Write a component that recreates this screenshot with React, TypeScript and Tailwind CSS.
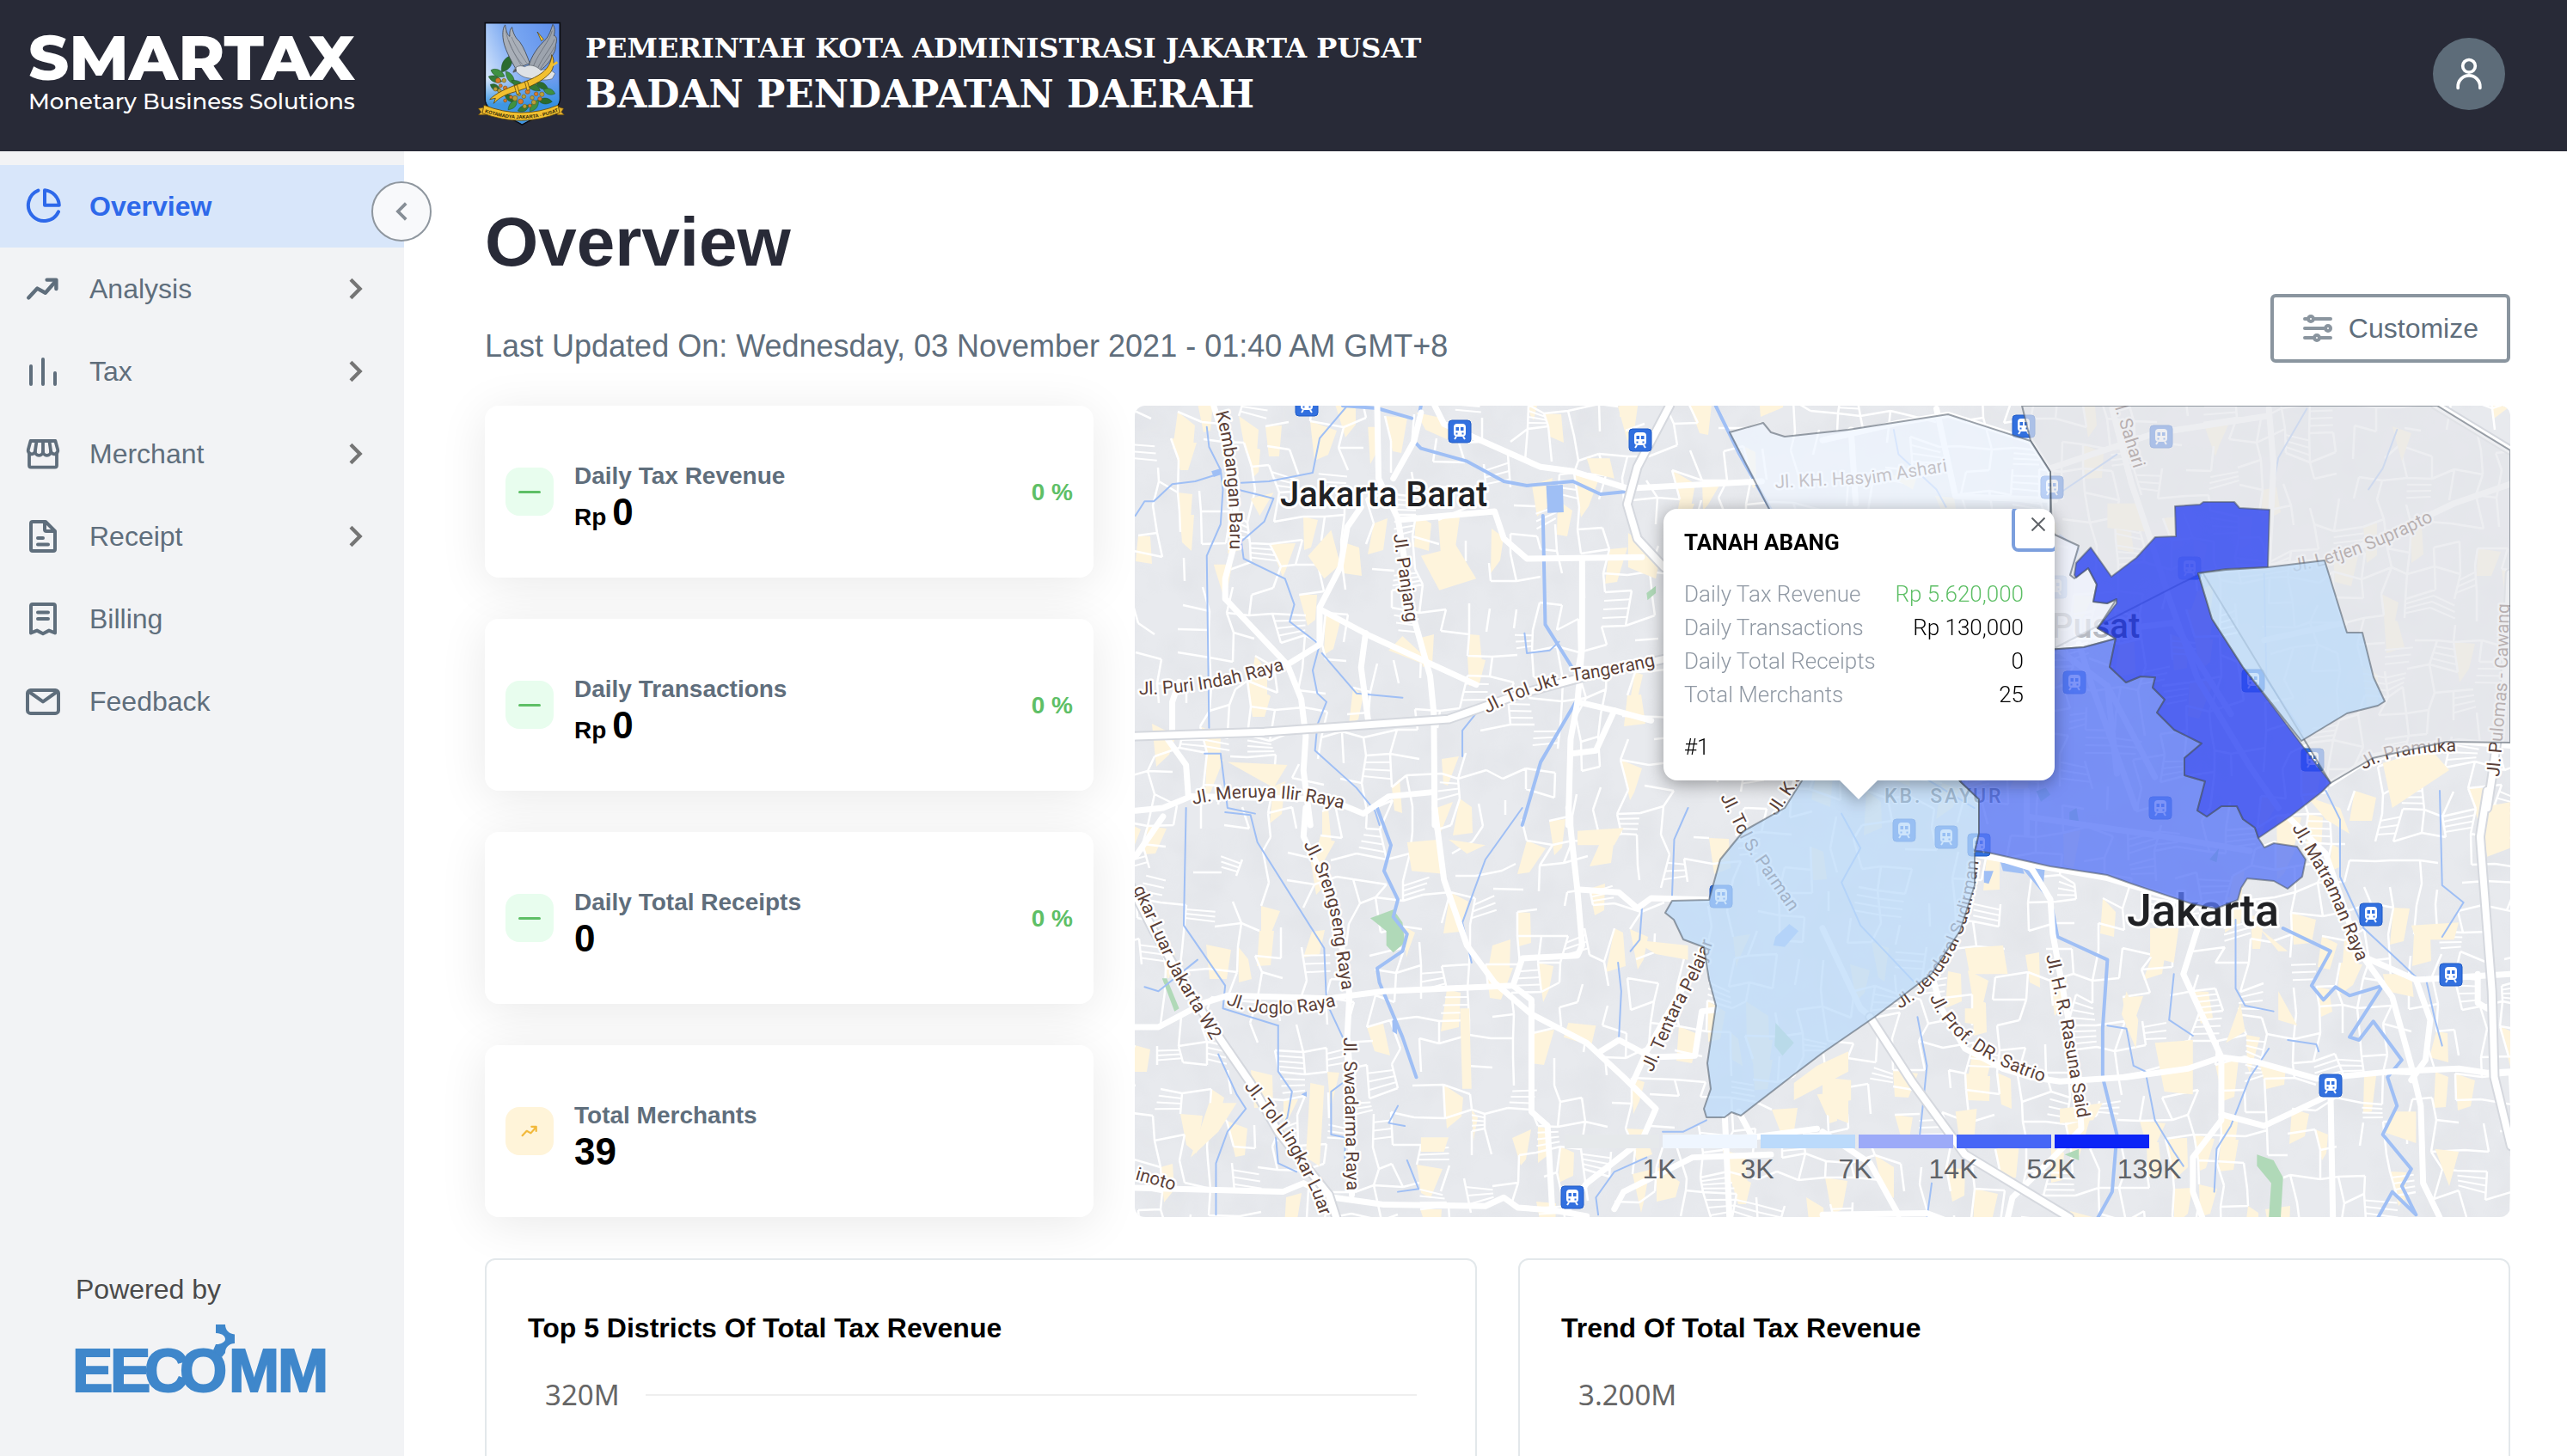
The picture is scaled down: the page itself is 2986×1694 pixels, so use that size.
import React from "react";

type IconProps = { className?: string };

const stroke = {
  fill: "none",
  stroke: "currentColor",
  strokeWidth: 2,
  strokeLinecap: "round" as const,
  strokeLinejoin: "round" as const,
};

const PieIcon = ({ className }: IconProps) => (
  <svg viewBox="0 0 24 24" className={className} {...stroke} aria-hidden="true">
    <path d="M9.200 2.800A9.200 9.200 0 1 0 21 15.200" />
    <path d="M13 2.600A9.200 9.200 0 0 1 21.400 11.400H13Z" />
  </svg>
);
const TrendIcon = ({ className }: IconProps) => (
  <svg viewBox="0 0 24 24" className={className} {...stroke} strokeWidth={2.2} aria-hidden="true">
    <path d="M3.600 17.200L8.700 11.800 13.400 14.400 19 8" />
    <path d="M14.300 6.800H19.700V12" />
  </svg>
);
const BarsIcon = ({ className }: IconProps) => (
  <svg viewBox="0 0 24 24" className={className} {...stroke} aria-hidden="true">
    <path d="M5 9v10.500M12 5v14.500M19 13v6.500" />
  </svg>
);
const StoreIcon = ({ className }: IconProps) => (
  <svg viewBox="0 0 24 24" className={className} {...stroke} strokeWidth={1.9} aria-hidden="true">
    <path d="M4 11.500V18.800a1 1 0 0 0 1 1H19a1 1 0 0 0 1-1V11.500" />
    <path d="M4.800 4.500H19.200L20.600 9.600a2 2 0 0 1-4 1 2.300 2.300 0 0 1-4.600 0 2.300 2.300 0 0 1-4.600 0 2 2 0 0 1-4-1Z" />
    <path d="M8.300 4.500L7.400 10.600M12 4.500V10.600M15.700 4.500L16.600 10.600" />
  </svg>
);
const FileIcon = ({ className }: IconProps) => (
  <svg viewBox="0 0 24 24" className={className} {...stroke} aria-hidden="true">
    <path d="M6 3.500H13.500L19 9V19.500a1 1 0 0 1-1 1H6a1 1 0 0 1-1-1V4.500a1 1 0 0 1 1-1Z" />
    <path d="M13 4V8a1 1 0 0 0 1 1H18.500M9 13h3M9 16.800h6" />
  </svg>
);
const BillIcon = ({ className }: IconProps) => (
  <svg viewBox="0 0 24 24" className={className} {...stroke} aria-hidden="true">
    <path d="M5 20.200V4.500a1 1 0 0 1 1-1H18a1 1 0 0 1 1 1V20.200L15.500 18.800 12 20.600 8.500 18.800Z" />
    <path d="M9 8.300h6M9 12h6" />
  </svg>
);
const MailIcon = ({ className }: IconProps) => (
  <svg viewBox="0 0 24 24" className={className} {...stroke} aria-hidden="true">
    <rect x="3" y="5.500" width="18" height="13.500" rx="1.800" />
    <path d="M4 6.500l8 5.700 8-5.700" />
  </svg>
);
const Chevron = ({ className }: IconProps) => (
  <svg viewBox="0 0 24 24" className={className} fill="none" stroke="currentColor" strokeWidth="3.200" aria-hidden="true">
    <path d="M7.500 4L15.500 12l-8 8" />
  </svg>
);
const SlidersIcon = ({ className }: IconProps) => (
  <svg viewBox="0 0 36 36" className={className} fill="none" stroke="currentColor" strokeWidth="4" strokeLinecap="round" aria-hidden="true">
    <path d="M3 7h3M14 7h19M3 18h22M3 29h10M21 29h12" />
    <circle cx="10" cy="7" r="3" />
    <circle cx="30" cy="18" r="3" />
    <circle cx="17" cy="29" r="3" />
  </svg>
);

const navItems = [
  { label: "Overview", Icon: PieIcon, active: true, expandable: false },
  { label: "Analysis", Icon: TrendIcon, active: false, expandable: true },
  { label: "Tax", Icon: BarsIcon, active: false, expandable: true },
  { label: "Merchant", Icon: StoreIcon, active: false, expandable: true },
  { label: "Receipt", Icon: FileIcon, active: false, expandable: true },
  { label: "Billing", Icon: BillIcon, active: false, expandable: false },
  { label: "Feedback", Icon: MailIcon, active: false, expandable: false },
];

const berries = [
  [103, 236, 9], [124, 236, 7], [112, 254, 6], [94, 266, 7], [128, 262, 7], [108, 272, 7], [140, 272, 6],
  [162, 298, 9], [182, 309, 9], [193, 292, 7], [206, 275, 8], [222, 296, 7], [236, 283, 7], [256, 284, 8],
  [249, 300, 7], [228, 312, 8], [214, 324, 6], [196, 326, 7], [148, 294, 6], [176, 284, 6], [128, 306, 6],
];

const leaves = [
  "M115 205C112 170 130 155 150 148C158 175 145 200 118 206Z",
  "M78 200C95 190 118 200 126 222C105 228 86 220 78 200Z",
  "M70 222C88 214 108 222 116 240C96 248 78 240 70 222Z",
  "M76 250C92 244 104 252 112 270C94 276 80 268 76 250Z",
  "M130 204C150 208 162 226 160 248C142 244 130 228 130 204Z",
  "M150 236C174 232 190 244 196 262C172 266 158 256 150 236Z",
  "M126 286C142 280 160 290 166 312C146 314 132 306 126 286Z",
  "M138 338C140 318 152 306 168 302C172 322 160 336 138 338Z",
  "M206 250C226 240 244 250 250 272C228 274 214 268 206 250Z",
  "M236 244C256 236 270 246 278 266C256 270 242 262 236 244Z",
  "M214 344C212 322 226 308 244 304C246 326 236 340 214 344Z",
  "M172 342C178 326 194 320 212 322C206 342 190 350 172 342Z",
  "M244 306C262 292 280 296 292 310C274 322 256 320 244 306Z",
  "M262 268C280 258 294 266 302 282C284 290 268 284 262 268Z",
];

function Crest() {
  return (
    <svg viewBox="0 0 366 420" className="h-[140px] w-[122px] shrink-0" role="img" aria-label="Kotamadya Jakarta Pusat">
      <defs>
        <linearGradient id="crestSky" x1="1" y1="0" x2="0" y2="0.6">
          <stop offset="0" stopColor="#5a8bea" />
          <stop offset="0.55" stopColor="#7ba9f2" />
          <stop offset="1" stopColor="#dceafc" />
        </linearGradient>
        <linearGradient id="crestWater" x1="0" y1="0" x2="0" y2="1">
          <stop offset="0.55" stopColor="#2f8ee0" stopOpacity="0" />
          <stop offset="0.8" stopColor="#2f8ee0" stopOpacity="0.9" />
        </linearGradient>
        <path id="crestBanner" d="M54 346Q186 394 316 343" />
      </defs>
      <path d="M58 35H319V300C319 345 250 352 187 390C124 352 58 345 58 300Z" fill="url(#crestSky)" stroke="#0b0d14" strokeWidth="5" />
      <path d="M60 37H317V300C317 345 250 350 187 388C124 350 60 345 60 300Z" fill="url(#crestWater)" />
      {leaves.map((d, i) => (
        <path key={d} d={d} fill={i % 3 === 0 ? "#2b6b2f" : i % 3 === 1 ? "#3f9142" : "#347a37"} stroke="#1d4a22" strokeWidth="1.500" />
      ))}
      {berries.map(([x, y, r], i) => (
        <circle key={`${x}-${y}`} cx={x} cy={y} r={r} fill={i % 2 ? "#b8a03a" : "#d77a2a"} stroke="#6b4a18" strokeWidth="1.500" />
      ))}
      <path d="M240 66L262 92L254 98Z" fill="#f5c93b" stroke="#4d3b0a" strokeWidth="2" />
      <path d="M165 195C150 170 122 120 120 85C118 60 124 44 128 42C132 66 136 78 144 82C142 66 146 54 152 50C156 74 166 90 178 100C194 122 204 150 214 176Z" fill="#a9afb8" stroke="#3f4650" strokeWidth="2.500" />
      <path d="M130 62C136 100 160 150 190 182M150 84C160 110 185 150 204 176M140 96C150 126 170 160 184 184" stroke="#6c737d" strokeWidth="2" fill="none" />
      <path d="M208 192C218 150 244 116 270 92C282 78 288 58 294 40C302 50 302 66 298 80C308 78 310 98 304 110C306 128 298 140 292 150C286 172 262 192 246 204Z" fill="#9da4ae" stroke="#3f4650" strokeWidth="2.500" />
      <path d="M292 62C282 100 250 130 226 186M300 92C288 124 262 148 240 196M300 118C290 140 268 168 250 196" stroke="#5d646e" strokeWidth="2" fill="none" />
      <path d="M156 208C158 188 178 180 196 188C214 178 236 184 252 200C270 194 290 198 302 212L292 230C268 238 236 232 212 228C190 226 176 214 166 204Z" fill="#dfe2e6" stroke="#596069" strokeWidth="2" />
      <path d="M166 190L154 208L168 204Z" fill="#4c515a" />
      <path d="M290 146C300 160 300 190 286 208C258 240 210 262 160 276C132 284 108 294 88 316L94 298L74 302C96 280 132 264 164 252C212 236 254 218 274 192C284 178 290 164 290 146Z" fill="#f2c02f" stroke="#5c430b" strokeWidth="2.500" />
      <path d="M288 186L310 172" stroke="#f2c02f" strokeWidth="8" />
      <rect x="164" y="252" width="10" height="32" fill="#f2c02f" stroke="#5c430b" strokeWidth="2" transform="rotate(-16 169 268)" />
      <rect x="200" y="238" width="10" height="32" fill="#f2c02f" stroke="#5c430b" strokeWidth="2" transform="rotate(-16 205 254)" />
      <path d="M34 334L62 328L60 356H34L44 346ZM332 334L306 326L310 356H334L324 346Z" fill="#e0ae2c" stroke="#5c430b" strokeWidth="2" />
      <path d="M54 322Q186 374 312 322L318 348Q186 402 48 350Z" fill="#f2c02f" stroke="#5c430b" strokeWidth="2.500" />
      <text className="font-['Liberation_Sans'] text-[17px] font-bold" fill="#2a2208" textAnchor="middle">
        <textPath href="#crestBanner" startOffset="50%">KOTAMADYA JAKARTA - PUSAT</textPath>
      </text>
    </svg>
  );
}

function Header() {
  return (
    <header className="flex h-44 shrink-0 bg-[#282a37] text-white">
      <div className="w-[545px] shrink-0 pl-[33px] pt-[31px] font-['Montserrat','Inter',sans-serif]">
        <div className="text-[73px] leading-[72px] font-extrabold">SMARTAX</div>
        <div className="text-[26px] leading-[30px] font-medium">Monetary Business Solutions</div>
      </div>
      <div className="pt-[15px]">
        <Crest />
      </div>
      <div className="pl-[14px] pt-[34px] font-['Roboto_Slab','DejaVu_Serif',serif] font-bold whitespace-nowrap">
        <div className="text-[32px] leading-[44px]">PEMERINTAH KOTA ADMINISTRASI JAKARTA PUSAT</div>
        <div className="mt-1 text-[44px] leading-[56px]">BADAN PENDAPATAN DAERAH</div>
      </div>
      <button aria-label="Account" className="mt-11 mr-[72px] ml-auto flex size-[84px] items-center justify-center rounded-full bg-[#5d6c79]">
        <svg viewBox="0 0 24 24" className="size-11" {...stroke}>
          <circle cx="12" cy="7" r="4" />
          <path d="M5 21v-1a7 7 0 0 1 14 0v1" />
        </svg>
      </button>
    </header>
  );
}

function PartnerLogo() {
  return (
    <svg viewBox="0 0 292 82" className="h-[82px] w-[292px] overflow-visible" role="img" aria-label="EECOMM" fill="#3f87cb">
      <text x="-4 40 80 121 178 235" y="78" stroke="#3f87cb" strokeWidth="2" className="font-['Liberation_Sans'] text-[71px] font-bold">EECOMM</text>
      <path d="M163 0H174C174 6 178 11 185 11.500V22C179 22 174 26 174 33L170 38 160 30 163 23C170 23 174 20 174 17C174 13 169 10 163 10Z" />
    </svg>
  );
}

function Sidebar() {
  return (
    <aside className="relative flex w-[470px] shrink-0 flex-col bg-[#f2f3f5] pt-4">
      <nav className="flex flex-col">
        {navItems.map(({ label, Icon, active, expandable }) => (
          <a
            key={label}
            href="#"
            className={
              active
                ? "flex h-24 items-center bg-[#d8e6fa] pr-10 pl-[26px] text-[32px] font-bold text-[#2e69ea]"
                : "flex h-24 items-center pr-10 pl-[26px] text-[32px] text-[#5f6e7c]"
            }
          >
            <Icon className="size-12" />
            <span className="ml-[30px] flex-1">{label}</span>
            {expandable && <Chevron className="size-8 text-[#757575]" />}
          </a>
        ))}
      </nav>
      <button
        aria-label="Collapse sidebar"
        className="absolute top-[35px] -right-8 z-10 flex size-[70px] items-center justify-center rounded-full border-2 border-[#8f979f] bg-[#f8f9fb] text-[#868e96]"
      >
        <Chevron className="size-7 rotate-180" />
      </button>
      <div className="mt-auto mb-[71px] ml-[88px]">
        <p className="text-[32px] leading-10 text-[#4a4a4a]">Powered by</p>
        <div className="mt-[21px]">
          <PartnerLogo />
        </div>
      </div>
    </aside>
  );
}

const stats = [
  { title: "Daily Tax Revenue", prefix: "Rp", value: "0", change: "0 %" },
  { title: "Daily Transactions", prefix: "Rp", value: "0", change: "0 %" },
  { title: "Daily Total Receipts", prefix: "", value: "0", change: "0 %" },
  { title: "Total Merchants", prefix: "", value: "39", change: "" },
];

function StatCard({ title, prefix, value, change }: (typeof stats)[number]) {
  return (
    <section className="flex h-[200px] items-center rounded-2xl bg-white px-6 shadow-[0_8px_56px_rgba(0,0,0,0.09)]">
      {change ? (
        <div className="flex size-14 items-center justify-center rounded-2xl bg-[#e8fdee]">
          <div className="h-[3px] w-[26px] rounded-full bg-[#5ebf66]" />
        </div>
      ) : (
        <div className="flex size-14 items-center justify-center rounded-2xl bg-[#fff4d9]">
          <TrendIcon className="size-6 text-[#f2b93b]" />
        </div>
      )}
      <div className="mt-3 ml-6 flex-1 font-bold">
        <h2 className="text-[28px] leading-9 text-[#5f6e7c]">{title}</h2>
        <p className="flex h-12 items-baseline gap-[7px] text-[44px] leading-[48px] text-black">
          {prefix && <span className="text-[28px] leading-none">{prefix}</span>}
          {value}
        </p>
      </div>
      <span className="pt-0.5 text-[28px] font-bold text-[#5ebf66]">{change}</span>
    </section>
  );
}

/* ---------- Map ---------- */

function createRandom(seed: number) {
  let s = seed;
  return () => {
    s = (s * 1664525 + 1013904223) % 4294967296;
    return s / 4294967296;
  };
}

function buildStreets() {
  const rnd = createRandom(77);
  const cols = 60;
  const rows = 36;
  const step = 28;
  const pts: number[][][] = [];
  for (let r = 0; r < rows; r++) {
    pts.push([]);
    for (let c = 0; c < cols; c++) {
      const bend = Math.sin(r / 6) * 14 + Math.cos(c / 8) * 6;
      pts[r].push([Math.round(c * step + bend + (rnd() - 0.5) * 14 - 20), Math.round(r * step + Math.sin(c / 5) * 12 + (rnd() - 0.5) * 14 - 20)]);
    }
  }
  let streets = "";
  let blocks = "";
  let lanes = "";
  for (let r = 0; r < rows - 1; r++) {
    for (let c = 0; c < cols - 1; c++) {
      const [x, y] = pts[r][c];
      const [x2, y2] = pts[r][c + 1];
      const [x3, y3] = pts[r + 1][c];
      const [x4, y4] = pts[r + 1][c + 1];
      const east = c > 36 ? 0.06 : 0;
      if (rnd() < 0.42 + east) streets += `M${x} ${y}L${x2} ${y2}`;
      if (rnd() < 0.48 + east) streets += `M${x} ${y}L${x3} ${y3}`;
      if (rnd() < 0.11) blocks += `M${x} ${y}L${x2 - 8} ${y2 + 4}L${x4 - 12} ${y4 + 8}L${x3 + 2} ${y3 + 12}Z`;
      if (rnd() < 0.09) {
        for (let k = 1; k < 4; k++) {
          const t = k / 4;
          lanes += `M${x + (x3 - x) * t} ${y + (y3 - y) * t}L${x2 + (x4 - x2) * t} ${y2 + (y4 - y2) * t}`;
        }
      }
    }
  }
  return { streets, blocks, lanes };
}

const { streets, blocks, lanes } = buildStreets();

type Tile = { transform: string; water: string[]; canals: string[]; roads: string[]; highways: string[]; parks: string[]; lakes: string[]; sands: string[] };

const tiles: Tile[] = [
  {
    transform: "translate(-10 -12) scale(.5357 .3333)",
    water: ["M640 36L625 160 640 185 740 230 820 300 870 315 970 300 1030 345 1090 335", "M905 420L910 800 980 980 980 1060 900 1280 860 1500", "M1280 36L1330 200 1400 400", "M470 36L545 45 620 80"],
    canals: [
      "M480 36L420 150 405 270 310 300 250 305",
      "M205 260L190 280 150 300 100 310 60 370 40 370 20 420",
      "M245 330L320 360 300 440 250 510 255 570 345 640 365 730 355 790 420 870 405 960 415 1040 435 1070 415 1150 410 1240 500 1370 540 1450 550 1500",
      "M175 110L180 180 205 260 210 330 205 450 175 560 180 1160",
      "M425 900L500 1040 600 1055",
      "M760 1110L730 1170 730 1260",
      "M865 830L870 900 920 890 940 860",
      "M170 1250L205 1250 220 1440 280 1460",
    ],
    roads: [
      "M190 36L240 300 235 520 215 640 215 710 350 940 380 1060 390 1190 385 1310 400 1500",
      "M545 36L548 290 590 430 625 780 660 980 668 1110 670 1500",
      "M640 60L625 160 580 290",
      "M670 36L690 100 900 250 970 265 1090 325",
      "M1090 325L1380 300",
      "M590 435L800 405 820 500 870 570 1120 565",
      "M510 390L480 460 465 600 420 740 420 870 350 940",
      "M425 750L530 840 760 1010",
      "M520 830L510 950 525 1130",
      "M990 570L990 880 980 1070 1060 1100 1140 1135",
      "M980 1070L965 1200 960 1500",
      "M20 1450L80 1440 140 1400 440 1410 515 1460 570 1400 665 1385",
      "M100 1190L100 1070 115 1000",
      "M90 1200L130 1290 135 1400",
      "M1060 1100L1020 1240 970 1250",
    ],
    highways: ["M20 1190L300 1175 700 1130 860 1040 1000 980 1170 920", "M1180 36L1110 250 1088 380 1110 500 1168 600"],
    parks: ["M1130 690L1150 665 1150 690 1132 715Z"],
    lakes: ["M912 315L948 312 950 408 915 410Z", "M185 265L205 255 208 275 190 285Z"],
    sands: ["M525 110L540 110 550 180 530 240Z", "M630 60L690 80 720 170 650 120Z", "M445 470L465 590 430 640 395 560Z", "M700 480L760 640 680 680 640 560 690 540Z", "M1090 480L1160 560 1150 640 1090 600Z", "M600 840L680 960 570 890Z", "M190 590L230 590 215 720Z", "M270 360L320 340 290 420Z", "M220 1280L350 1290 320 1370Z", "M1000 220L1050 220 1060 290 1010 270Z"],
  },
  {
    transform: "translate(-10 468) scale(.5357 .3333)",
    water: ["M545 0L575 130 560 220 590 320 580 380 610 440 600 500 545 560 550 610 600 800 630 940"],
    canals: [
      "M130 0L125 410 215 620 210 700 330 760",
      "M215 15L270 25 285 120 430 490 435 680 470 800",
      "M860 0L780 180 730 400 750 540",
      "M1220 0L1190 110 1185 320",
      "M200 860L240 1000 260 1050 220 1130 195 1240 195 1420",
      "M330 760L330 920 360 990 350 1080 325 1150 330 1240 370 1270",
      "M1260 1090L1210 1130 1165 1130",
      "M1120 350L1115 460 1095 500",
      "M1068 540L1075 640 1070 800",
      "M470 960L445 990 445 1140 475 1150 475 1290",
      "M1130 1220L1060 1270 1020 1360 1025 1420",
      "M610 1230L635 1330 590 1340",
      "M590 1040L570 1100 605 1110",
      "M40 625L70 640 155 530",
    ],
    roads: [
      "M390 0L385 100 440 280 470 500 485 650 480 800 490 1000 490 1350",
      "M670 0L690 250 740 480 800 610 880 720 1000 820 1080 940 1150 1050 1120 1160 1000 1310 960 1400",
      "M20 765L70 765 170 680 220 655 440 665 560 640 840 620 860 525 980 515 990 480 980 290 960 0",
      "M985 285L1070 295 1110 350 1140 315 1260 320",
      "M0 1325L340 1340 385 1310 450 1360 540 1380 560 1385 780 1390 820 1360 850 1395 930 1405 1000 1425",
      "M840 620L880 670 880 1060 915 1110 925 1400",
      "M1270 480L1200 650 1130 850 1100 960",
      "M80 30L20 170",
      "M1030 850L1070 810 1140 870 1235 865 1250 710 1280 705",
      "M1330 1060L1360 1150 1500 1120",
      "M1060 1400L1080 1340 1230 1220 1400 1210",
      "M1300 1080L1310 1430",
    ],
    highways: ["M0 240L60 430 140 650 210 820 270 960 330 1130 440 1350 470 1500"],
    parks: ["M530 385L580 355 600 400 605 470 580 505 565 480 565 430Z", "M78 595L88 595 115 700 105 710Z", "M1410 750L1450 820 1425 865 1408 830Z"],
    lakes: ["M578 740L588 740 588 790 578 780Z", "M1410 450L1440 405 1460 430 1430 485 1405 480Z", "M380 1000L392 990 392 1008Z"],
    sands: ["M610 120L680 110 690 230 620 220Z", "M980 80L1080 70 1060 130 980 130Z", "M700 110L780 130 740 160Z", "M1100 460L1220 480 1220 530 1150 510Z", "M960 750L1020 760 1010 830 950 800Z", "M725 700L745 700 750 980 730 980Z", "M400 960L430 970 420 1250 390 1220Z", "M180 1030L240 1030 200 1130 140 1220Z", "M640 1150L700 1150 690 1200 640 1200Z", "M1450 960L1500 900 1568 850 1568 920 1450 1020Z", "M1500 1000L1568 990 1568 1100 1520 1070Z"],
  },
  {
    transform: "translate(800 -172) scale(.5523 .4082)",
    water: ["M420 980L400 1080 430 1200"],
    canals: ["M150 490L160 560 240 660 260 710", "M1210 490L1180 600 1150 660", "M1020 430L960 570 940 720", "M930 900L935 1200 1010 1350", "M60 1400L200 1470 320 1568", "M500 790L540 830 520 900", "M620 560L500 670"],
    roads: [
      "M0 520L160 470 265 447 438 522 480 610 480 800",
      "M60 490L70 700",
      "M240 430L280 680 490 690",
      "M610 430L650 640 690 800 730 970 790 1200 900 1450 960 1568",
      "M940 430L950 590 945 720 938 882",
      "M800 897L1060 863 1190 790 1330 700 1448 645",
      "M1070 1498L1160 1420 1340 1378 1448 1390",
      "M500 1120L600 1220 700 1480",
      "M600 1220L620 1470",
      "M540 1100L570 1230 660 1568",
      "M480 600L700 500 940 450",
      "M620 1060L740 1040 860 1300",
      "M930 1090L1100 1040",
    ],
    highways: ["M1448 900L1438 1200 1410 1480 1400 1568", "M1290 418L1448 548"],
    parks: ["M450 1520L470 1510 480 1530 460 1550Z"],
    lakes: [],
    sands: ["M600 700L660 700 680 780 600 770Z", "M1200 480L1240 500 1220 580Z", "M1180 1440L1280 1400 1320 1460 1200 1568Z", "M140 620L200 620 190 660Z"],
  },
  {
    transform: "translate(800 448) scale(.5523 .3333)",
    water: ["M425 270L480 380 495 510 600 590 590 830 590 1000 620 1200 610 1400 580 1490", "M970 480L1070 560 1030 680 1055 730 1080 685 1110 715 1180 680 1110 860 1130 870 1160 805 1220 940 1190 1000 1210 1100 1180 1200 1240 1320 1220 1380 1250 1480 1200 1400 1170 1490"],
    canals: [
      "M870 450L870 690 890 750 950 770",
      "M1060 0L1090 100 1090 300 1140 480 1250 650",
      "M740 640L730 800 780 855",
      "M600 820L640 830 655 960 680 980 700 1150 740 1260 760 1310",
      "M825 1400L830 1250 860 1170 900 1000 940 900",
      "M200 790L220 960 205 1200",
      "M1300 0L1305 330 1350 390 1305 510",
      "M1270 650L1290 800 1305 890",
      "M40 80L80 200 40 320 80 470 200 680",
      "M980 870L1040 885 1045 910",
      "M230 1370L220 1490",
    ],
    roads: [
      "M360 230L440 270 480 380 485 500 540 1000 545 1180 480 1290 400 1420 390 1490",
      "M230 640L250 760 300 900 380 970 440 1000 500 1015 640 1000 770 970 840 930 910 945 1040 1005 1200 980 1340 970 1400 985 1450 980",
      "M840 940L840 1150 780 1280 780 1400 800 1490",
      "M330 225L600 305 780 395",
      "M790 480L760 640 840 930",
      "M980 90L1060 220 1130 560 1200 720 1240 960 1260 1100 1265 1370 1300 1490",
      "M1140 580L1250 660 1450 640",
      "M1250 660L1280 800 1270 940 1240 1010",
      "M840 1130L930 1170 1070 1060 1075 1490",
      "M0 1480L220 1475 260 1500",
      "M0 1190L100 1300 160 1480",
      "M430 150L430 0",
      "M430 90L720 160 900 210",
      "M1380 640L1380 740 1400 760",
      "M0 480L80 760 110 800",
    ],
    highways: ["M100 790L190 1020 300 1270 520 1490", "M1400 0L1385 160 1410 700 1415 1000 1450 1240"],
    parks: ["M915 1270L950 1290 970 1350 965 1490 940 1490 945 1370 915 1310Z", "M520 75L535 60 540 110 520 105Z", "M815 240L835 200 830 250Z", "M510 1270L540 1250 540 1290Z"],
    lakes: ["M375 250L420 260 425 290 380 280Z", "M445 270L468 275 465 330 450 300Z", "M340 280L360 280 350 325 340 320Z"],
    sands: ["M300 550L380 540 390 640 310 640Z", "M300 760L340 760 340 820 300 810Z", "M690 480L750 480 740 600 690 580Z", "M700 880L780 870 780 1060 720 1050Z", "M920 480L980 560 960 560Z", "M1180 640L1240 640 1245 720 1190 700Z", "M1240 470L1340 460 1330 520 1250 520Z", "M1200 1120L1250 1120 1250 1230 1180 1190Z", "M0 1000L60 1010 60 1080 0 1100Z", "M640 700L665 800 660 900 630 780Z", "M1020 20L1090 60 1110 150 1060 100Z", "M500 1110L590 1090 570 1150 500 1160Z", "M1290 1250L1340 1260 1320 1380Z", "M960 700L1000 820 960 800Z", "M880 740L890 840 850 880Z", "M280 1120L325 1110 320 1200 290 1240Z", "M1380 60L1448 40 1448 200 1400 230Z"],
  },
];

const roadLabels = [
  { text: "Jl. Puri Indah Raya", d: "M5 336Q90 336 190 302" },
  { text: "Kembangan Baru", d: "M94 8Q114 80 110 190" },
  { text: "Jl. Panjang", d: "M301 150L318 270" },
  { text: "Jl. Tol Jkt - Tangerang", d: "M410 358Q460 332 512 320Q570 312 650 292" },
  { text: "Jl. Meruya Ilir Raya", d: "M68 464Q160 444 260 474" },
  { text: "Jl. Srengseng Raya", d: "M196 510Q228 570 232 620L246 710" },
  { text: "Jl. Joglo Raya", d: "M106 696Q160 720 250 694" },
  { text: "gkar Luar Jakarta W2", d: "M-2 562L40 655L120 790" },
  { text: "Jl. Tol Lingkar Luar", d: "M127 792L175 855L206 915L240 1010" },
  { text: "Jl. Swadarma Raya", d: "M243 735L247 930" },
  { text: "inoto", d: "M0 900L70 920" },
  { text: "Jl. Tentara Pelajar", d: "M602 776L636 700Q672 640 682 590" },
  { text: "Jl. Tol S. Parman", d: "M681 455L708 510L790 630" },
  { text: "Jl. K.S.", d: "M746 478L785 420" },
  { text: "Jl. KH. Hasyim Ashari", d: "M745 96L860 90L960 74" },
  { text: "l. Sahari", d: "M1140 2L1170 100" },
  { text: "Jl. Letjen Suprapto", d: "M1348 193Q1420 182 1530 124" },
  { text: "Jl. Pramuka", d: "M1430 424Q1460 402 1550 402" },
  { text: "Jl. Pulomas - Cawang", d: "M1587 432L1596 330L1600 190" },
  { text: "Jl. Matraman Raya", d: "M1346 491L1386 560L1436 680" },
  { text: "Jl. H. R. Rasuna Said", d: "M1060 640L1076 710L1102 860" },
  { text: "Jl. Prof. DR. Satrio", d: "M925 688Q950 758 1080 794" },
  { text: "Jl. Jenderal Sudirman", d: "M890 702Q980 650 984 490" },
];

const districts = [
  { fill: "#e4e6ea", opacity: 0.68, d: "M1032 0H1515L1600 52V392L1526 391 1440 410 1391 439 1242 194 1070 282 1065 77 1042 41Z" },
  { fill: "#eff5ff", opacity: 0.72, d: "M692 31L731 20 740 31 756 36 830 28 946 10 1042 41 1065 77 1065 124 740 124Z" },
  { fill: "#f1f5ff", opacity: 0.72, d: "M1060 124L1070 150 1085 157 1098 163 1088 197 1093 201 1109 189 1119 208 1115 228 1131 230 1142 225 1120 259 1141 271 1104 281 1060 284Z" },
  { fill: "#bcdafa", opacity: 0.74, d: "M756 468L708 495 681 528 668 575 625 576 617 590 627 598 638 621 662 630 668 668 676 698 666 765 670 795 662 818 665 828 686 828 694 822 705 826 767 778 800 753 861 711 927 661 960 611 977 558 977 521 982 498 982 458 960 437 930 400 780 430Z" },
  { fill: "#5a77f6", opacity: 0.79, d: "M1060 284L1104 281 1141 271 1134 304 1153 322 1170 315 1187 316 1184 328 1198 342 1189 357 1209 377 1241 393 1221 410 1221 430 1245 437 1236 471 1247 478 1264 466 1282 466 1289 481 1303 491 1307 503 1314 514 1325 509 1352 513 1362 528 1358 548 1341 562 1325 553 1294 550 1287 561 1283 575 1258 585 1231 580 1159 556 1131 546 1065 536 993 520 977 518 982 498 982 458 960 437 1000 400Z" },
  { fill: "#2d45f2", opacity: 0.81, d: "M1210 117L1239 115 1243 112 1279 112 1285 119 1320 121 1318 188 1269 190 1242 194 1237 195 1253 248 1289 304 1391 439 1380 450 1344 478 1307 503 1303 491 1289 481 1282 466 1264 466 1247 478 1236 471 1245 437 1221 430 1221 410 1241 393 1209 377 1189 357 1198 342 1184 328 1187 316 1170 315 1153 322 1134 304 1141 271 1120 259 1142 230 1142 225 1131 230 1115 228 1119 208 1109 189 1095 200 1093 197 1095 183 1112 165 1136 199 1165 177 1187 153 1211 152Z" },
  { fill: "#bcdafa", opacity: 0.74, d: "M1237 195L1269 191 1318 188 1384 180 1410 264 1428 264 1441 316 1454 344 1446 349 1410 358 1357 390 1289 304 1253 248Z" },
];

const stations = [
  [200, -1], [378, 30], [588, 40], [1034, 24], [1194, 36], [1067, 95], [1071, 211], [1227, 189], [1093, 322],
  [1301, 320], [1370, 412], [1193, 468], [895, 494], [944, 502], [982, 511], [1438, 592], [1531, 662],
  [1391, 791], [682, 571], [509, 921],
];

const tileLayers: { key: keyof Omit<Tile, "transform">; fill?: string; stroke?: string; width?: number }[] = [
  { key: "sands", fill: "#fef4dc" },
  { key: "parks", fill: "#b0d9b8" },
  { key: "lakes", fill: "#9fbff5" },
  { key: "canals", stroke: "#9fbff5", width: 2 },
  { key: "water", stroke: "#9fbff5", width: 4 },
  { key: "roads", stroke: "#ffffff", width: 7 },
  { key: "highways", stroke: "#d5d8de", width: 12 },
  { key: "highways", stroke: "#ffffff", width: 8 },
];

function MapCanvas() {
  return (
    <svg viewBox="0 0 1600 944" preserveAspectRatio="xMidYMid slice" className="block h-full w-full font-['Roboto',sans-serif]" role="img" aria-label="Map of Jakarta districts">
      <defs>
        <filter id="relief" x="0" y="0" width="100%" height="100%">
          <feTurbulence type="fractalNoise" baseFrequency="0.018" numOctaves="3" seed="4" />
          <feColorMatrix values="0 0 0 0 0.5  0 0 0 0 0.52  0 0 0 0 0.57  0.9 0 0 0 -0.36" />
        </filter>
        {roadLabels.map((l, i) => (
          <path key={l.text} id={`road-${i}`} d={l.d} />
        ))}
      </defs>
      <rect width="1600" height="944" fill="#e8eaee" />
      <rect width="1600" height="944" filter="url(#relief)" opacity="0.25" />
      <path d={blocks} fill="#fef4dc" />
      <g fill="none" stroke="#ffffff" strokeLinejoin="round">
        <path d={lanes} strokeWidth="2" />
        <path d={streets} strokeWidth="2.500" />
      </g>
      {tileLayers.map((layer, i) => (
        <g key={i} fill={layer.fill ?? "none"} stroke={layer.stroke} strokeWidth={layer.width} strokeLinejoin="round" strokeLinecap="round">
          {tiles.map((t) => (
            <g key={t.transform} transform={t.transform}>
              {t[layer.key].map((d) => (
                <path key={d} d={d} vectorEffect="non-scaling-stroke" />
              ))}
            </g>
          ))}
        </g>
      ))}
      {stations.map(([x, y]) => (
        <g key={`${x}-${y}`} transform={`translate(${x - 13} ${y - 13})`}>
          <rect width="26" height="26" rx="4" fill="#3270df" stroke="#1f5bc7" />
          <rect x="6" y="4" width="14" height="15" rx="4" fill="#fff" />
          <path d="M8.500 8H12V12H8.500ZM14 8H17.500V12H14ZM8.500 14.500H10.500V16.500H8.500ZM15.500 14.500H17.500V16.500H15.500Z" fill="#3270df" />
          <path d="M9 19L7 22M17 19L19 22" stroke="#fff" strokeWidth="2" />
        </g>
      ))}
      <g fill="#5a4038" stroke="#ffffff" strokeWidth="5" strokeLinejoin="round" paintOrder="stroke" className="text-[21px]">
        {roadLabels.map((l, i) => (
          <text key={l.text}>
            <textPath href={`#road-${i}`}>{l.text}</textPath>
          </text>
        ))}
      </g>
      <g fill="#202124" stroke="#ffffff" strokeWidth="6" strokeLinejoin="round" paintOrder="stroke" className="font-medium">
        <text x="169" y="117" className="text-[40px]">Jakarta Barat</text>
        <text x="1066" y="270" className="text-[40px]">Pusat</text>
        <text x="1154" y="605" className="text-[52px]">Jakarta</text>
        <text x="872" y="462" className="text-[23px] tracking-[3px]" fill="#4d5156" strokeWidth="3">KB. SAYUR</text>
      </g>
      {districts.map((a) => (
        <path key={a.d} d={a.d} fill={a.fill} fillOpacity={a.opacity} stroke="#4b5563" strokeOpacity="0.55" strokeWidth="2" strokeLinejoin="round" />
      ))}
    </svg>
  );
}

const popupRows = [
  { label: "Daily Tax Revenue", value: "Rp 5.620,000", tone: "text-[#5ebf66]" },
  { label: "Daily Transactions", value: "Rp 130,000", tone: "text-black" },
  { label: "Daily Total Receipts", value: "0", tone: "text-black" },
  { label: "Total Merchants", value: "25", tone: "text-black" },
];

function MapPopup() {
  return (
    <div className="absolute top-[120px] left-[615px] h-[316px] w-[455px] font-['Roboto',sans-serif] text-[26px] leading-[39px] font-light drop-shadow-[0_4px_10px_rgba(0,0,0,0.35)]">
      <div className="relative h-full overflow-hidden rounded-2xl bg-white pt-5 pr-9 pl-6">
        <h3 className="font-bold text-black">TANAH ABANG</h3>
        <dl className="mt-[21px]">
          {popupRows.map((r) => (
            <div key={r.label} className="flex justify-between">
              <dt className="text-[#8f98a3]">{r.label}</dt>
              <dd className={r.tone}>{r.value}</dd>
            </div>
          ))}
        </dl>
        <p className="mt-[22px] text-black">#1</p>
        <button aria-label="Close" className="absolute -top-1 -right-1 flex h-[54px] w-[54px] justify-center rounded-lg border-4 border-[#7c9fdd] pt-2.5 text-[#5f6368]">
          <svg viewBox="0 0 16 16" className="ml-2 size-4" stroke="currentColor" strokeWidth="2" aria-hidden="true">
            <path d="M0.500 0.500L15.500 15.500M15.500 0.500L0.500 15.500" />
          </svg>
        </button>
      </div>
      <svg viewBox="0 0 44 22" className="absolute top-full left-[205px] h-[22px] w-11" fill="#fff" aria-hidden="true">
        <path d="M0 0H44L22 22Z" />
      </svg>
    </div>
  );
}

const legendColors = ["bg-[#e6e9eb]", "bg-[#eff6ff]", "bg-[#bbdafb]", "bg-[#9caaf8]", "bg-[#4666f6]", "bg-[#0b24f6]"];
const legendTicks = ["1K", "3K", "7K", "14K", "52K", "139K"];

function MapPanel() {
  return (
    <section className="relative min-w-0 flex-1 overflow-hidden rounded-xl">
      <div className="absolute inset-0">
        <MapCanvas />
      </div>
      <MapPopup />
      <div className="absolute bottom-9 left-[500px]">
        <div className="flex gap-1">
          {legendColors.map((c) => (
            <div key={c} className={`h-4 w-[110px] ${c}`} />
          ))}
        </div>
        <div className="ml-[55px] flex gap-1 pt-1 text-[32px] leading-10 text-[#5f6368]">
          {legendTicks.map((t) => (
            <span key={t} className="w-[110px] text-center">
              {t}
            </span>
          ))}
        </div>
      </div>
    </section>
  );
}

function ChartCard({ title, tick, line }: { title: string; tick: string; line: boolean }) {
  return (
    <section className="h-[700px] flex-1 rounded-xl border-2 border-[#e3e8eb] bg-white px-12 pt-[59px]">
      <h2 className="text-[32px] leading-10 font-bold text-black">{title}</h2>
      <div className="mt-[38px] mr-5 ml-5 flex items-center gap-[30px]">
        <span className="font-['Noto_Sans',sans-serif] text-[33px] leading-10 text-[#666]">{tick}</span>
        {line && <div className="h-0.5 flex-1 bg-[#efefef]" />}
      </div>
    </section>
  );
}

export default function App() {
  return (
    <div className="flex h-screen flex-col overflow-hidden bg-white font-['Liberation_Sans',Arial,sans-serif]">
      <Header />
      <div className="flex min-h-0 flex-1">
        <Sidebar />
        <main className="min-w-0 flex-1 pt-[58px] pr-[66px] pl-[94px]">
          <div className="flex items-end justify-between">
            <div>
              <h1 className="text-[80px] leading-[96px] font-bold text-[#282a37]">Overview</h1>
              <p className="mt-[46px] text-[36px] leading-[54px] text-[#5f6e7c]">
                Last Updated On: Wednesday, 03 November 2021 - 01:40 AM GMT+8
              </p>
            </div>
            <button className="mb-2 flex h-20 items-center gap-[18px] rounded-md border-4 border-[#8a959f] px-[33px] text-[32px] text-[#5f6e7c]">
              <SlidersIcon className="size-9 text-[#8a959f]" />
              Customize
            </button>
          </div>
          <div className="mt-[42px] flex gap-12">
            <div className="flex w-[708px] shrink-0 flex-col gap-12">
              {stats.map((s) => (
                <StatCard key={s.title} {...s} />
              ))}
            </div>
            <MapPanel />
          </div>
          <div className="mt-12 flex gap-12">
            <ChartCard title="Top 5 Districts Of Total Tax Revenue" tick="320M" line />
            <ChartCard title="Trend Of Total Tax Revenue" tick="3.200M" line={false} />
          </div>
        </main>
      </div>
    </div>
  );
}
